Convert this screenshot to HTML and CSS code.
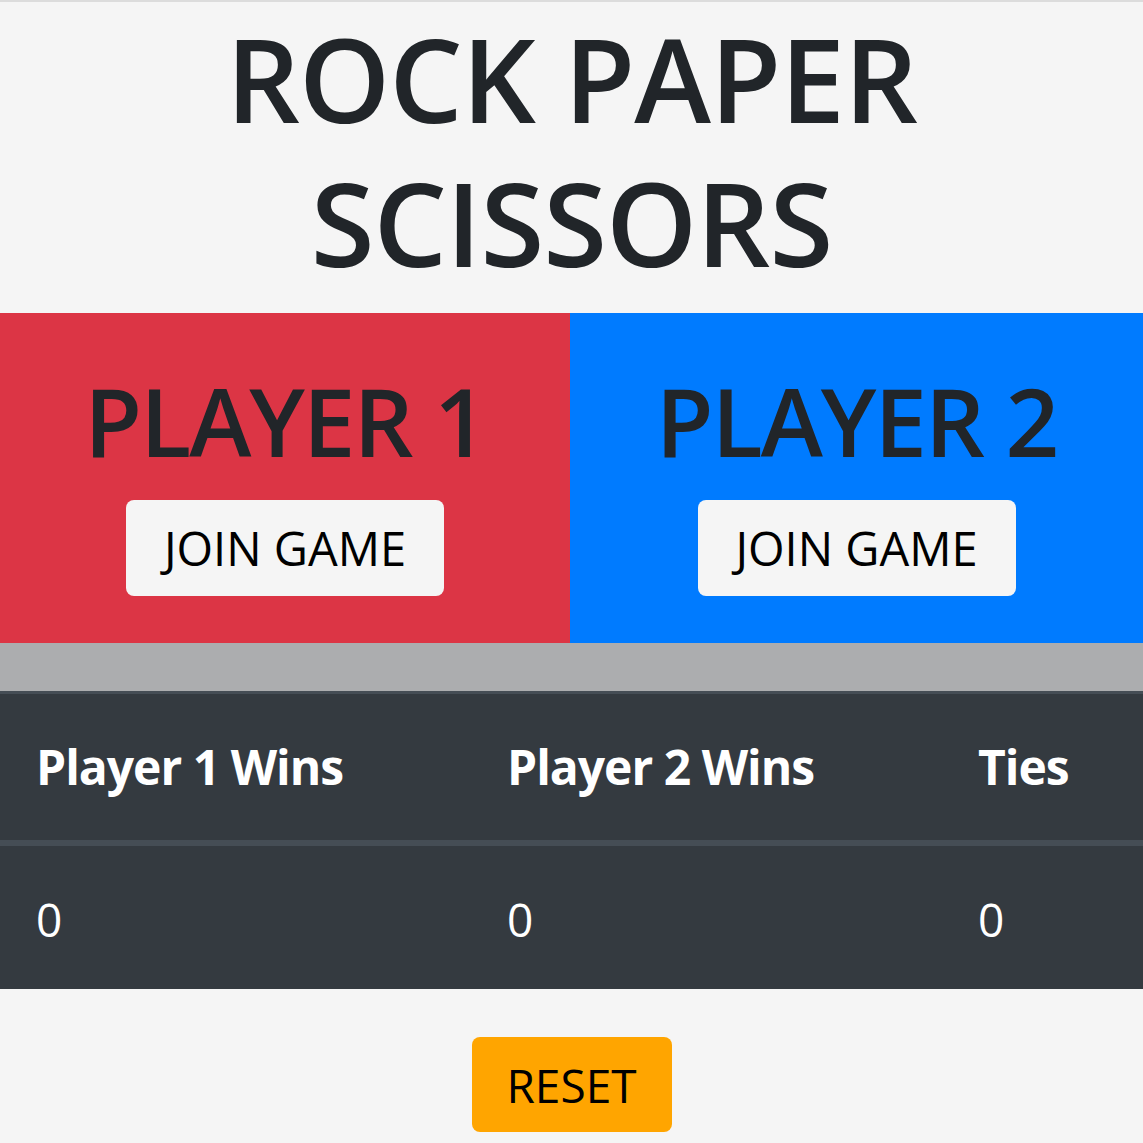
FILE: index.html
```html
<!DOCTYPE html>
<html lang="en">
<head>
<meta charset="utf-8">
<title>Rock Paper Scissors</title>
<link rel="stylesheet" href="styles.css">
</head>
<body>
<h1 class="title">ROCK PAPER SCISSORS</h1>
<div class="players">
  <section class="player player-one">
    <h2 class="player-name">PLAYER 1</h2>
    <button class="join-btn" type="button">JOIN GAME</button>
  </section>
  <section class="player player-two">
    <h2 class="player-name">PLAYER 2</h2>
    <button class="join-btn" type="button">JOIN GAME</button>
  </section>
</div>
<div class="status-bar"></div>
<table class="score-table">
  <colgroup>
    <col class="col-wide">
    <col class="col-wide">
    <col>
  </colgroup>
  <thead>
    <tr><th>Player 1 Wins</th><th>Player 2 Wins</th><th>Ties</th></tr>
  </thead>
  <tbody>
    <tr><td>0</td><td>0</td><td>0</td></tr>
  </tbody>
</table>
<div class="reset-wrap">
  <button class="reset-btn" type="button">RESET</button>
</div>
</body>
</html>
```
FILE: styles.css
```css
html, body {
  margin: 0;
  padding: 0;
}
body {
  background: #f5f5f5;
  color: #212529;
  font-family: "Open Sans", "Noto Sans", sans-serif;
  border-top: 2px solid #dcdcdc;
}
.title {
  margin: 4px auto 19px;
  width: 760px;
  text-align: center;
  font-size: 116px;
  line-height: 144px;
  font-weight: 600;
  letter-spacing: -1px;
}
.players {
  display: flex;
}
.player {
  display: flex;
  flex-direction: column;
  align-items: center;
  padding: 52px 0 47px;
}
.player-one {
  flex: 0 0 570px;
  background: #dc3545;
}
.player-two {
  flex: 1 1 auto;
  background: #007bff;
}
.player-name {
  margin: 0 0 22px;
  font-size: 94px;
  line-height: 113px;
  font-weight: 600;
  letter-spacing: -2px;
  color: #212529;
}
.join-btn {
  width: 318px;
  height: 96px;
  border: 0;
  border-radius: 8px;
  background: #f5f5f5;
  color: #000;
  font-family: inherit;
  font-size: 47px;
  font-weight: 400;
  padding: 0;
}
.status-bar {
  height: 48px;
  background: #acadaf;
}
.score-table {
  width: 100%;
  border-collapse: collapse;
  background: #343a40;
  color: #fff;
  border-top: 3px solid #454d55;
}
.col-wide {
  width: 471px;
}
.score-table th,
.score-table td {
  text-align: left;
  padding: 36px;
  line-height: 74px;
}
.score-table th {
  font-size: 48px;
  font-weight: 700;
  letter-spacing: -1px;
  border-bottom: 6px solid #454d55;
}
.score-table td {
  font-size: 46px;
  font-weight: 400;
  padding-bottom: 33px;
}
.reset-wrap {
  display: flex;
  justify-content: center;
  padding: 48px 0 12px;
}
.reset-btn {
  width: 200px;
  height: 95px;
  border: 0;
  border-radius: 8px;
  background: #ffa500;
  color: #000;
  font-family: inherit;
  font-size: 46px;
  padding: 0;
}
```
